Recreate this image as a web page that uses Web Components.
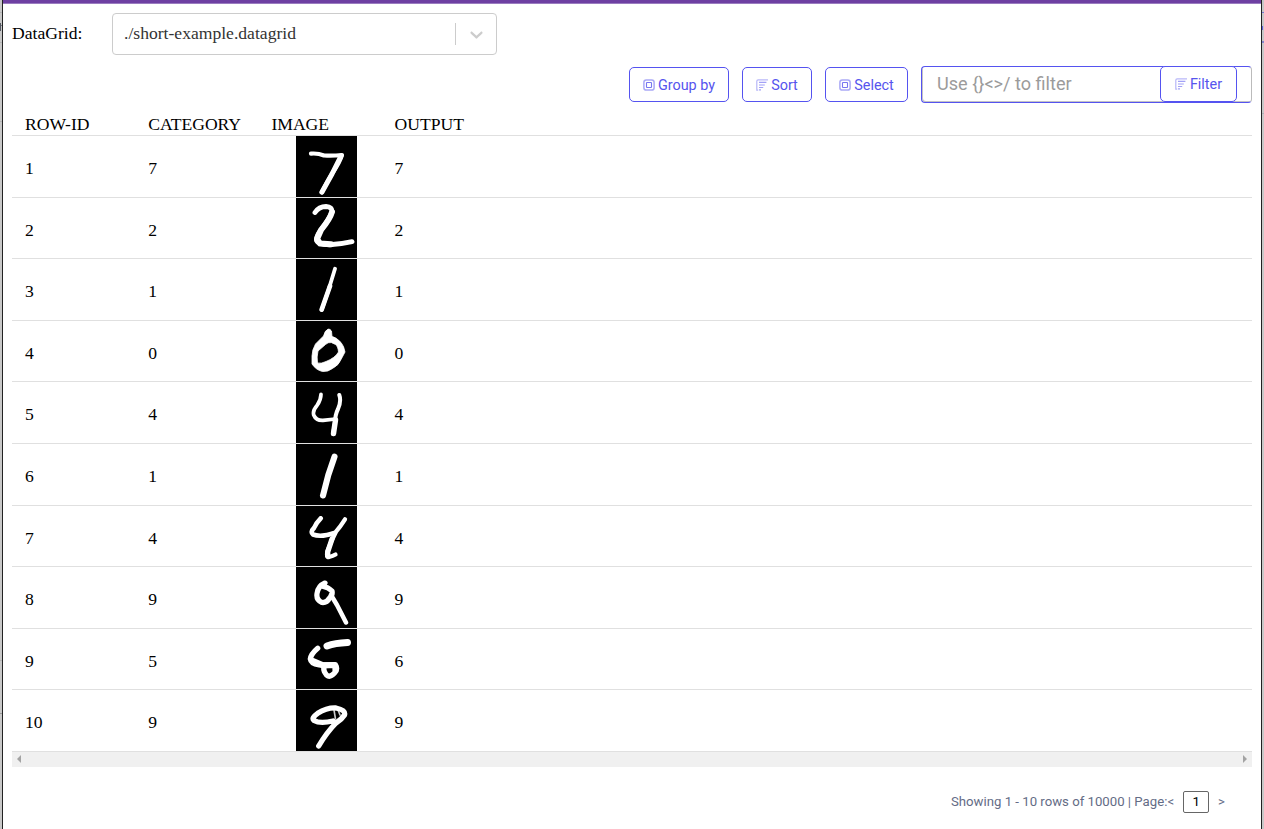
<!DOCTYPE html>
<html lang="en">
<head>
<meta charset="utf-8">
<title>DataGrid</title>
<style>
html, body { margin: 0; height: 100%; overflow: hidden; background: #fff; }
body { font: 17.6px "Liberation Serif", serif; color: #000; }
</style>
</head>
<body>
<datagrid-app></datagrid-app>
<script>
const define = (name, html, init) => {
  const t = document.createElement('template');
  t.innerHTML = html;
  customElements.define(name, class extends HTMLElement {
    connectedCallback() {
      if (this.shadowRoot) return;
      this.attachShadow({ mode: 'open' }).append(t.content.cloneNode(true));
      if (init) init(this, this.shadowRoot);
    }
  });
};

define('grid-select', `<style>
:host { display: flex; align-items: center; box-sizing: border-box; width: 385px; height: 42px; border: 1px solid #ccc; border-radius: 4px; color: #333; }
span { flex: 1; padding: 0 0 2px 11px; }
i { width: 1px; height: 22px; background: #ccc; }
svg { margin: 0 9px 0 10px; width: 21px; height: 21px; fill: #ccc; }
</style><span><slot></slot></span><i></i>
<svg viewBox="0 0 20 20"><path d="M4.516 7.548c0.436-0.446 1.043-0.481 1.576 0l3.908 3.747 3.908-3.747c0.533-0.481 1.141-0.446 1.574 0 0.436 0.445 0.408 1.197 0 1.615-0.406 0.418-4.695 4.502-4.695 4.502-0.217 0.223-0.502 0.335-0.787 0.335s-0.57-0.112-0.789-0.335c0 0-4.287-4.084-4.695-4.502s-0.436-1.17 0-1.615z"/></svg>`);

const icons = {
  box: '<rect x=".9" y=".9" width="10.2" height="10.2" rx="2.4" stroke-width="1.5" opacity=".5"/><rect x="3.5" y="3.5" width="5" height="5" rx=".6" stroke-width="1.1" opacity=".8"/>',
  sort: '<g stroke-width="1.2"><path d="M12 .9H2.2Q.8.9.8 2.3V11.1H2.2" opacity=".42"/><path d="M3 3.4h7.4M3 6h5.8M3 8.5h4.2M3 10.9h2" opacity=".55"/></g>'
};
define('tool-button', `<style>
:host { display: flex; align-items: center; justify-content: center; box-sizing: border-box; height: 35px; border: 1px solid #5553f0; border-radius: 5px; background: #fff; color: #5654ee; font: 14.4px Roboto, sans-serif; white-space: nowrap; }
svg { width: 12px; height: 12px; margin: 0 3px 1px 0; fill: none; stroke: #5654ee; }
</style><svg viewBox="0 0 12 12"></svg><slot></slot>`, (el, r) => {
  r.querySelector('svg').innerHTML = icons[el.getAttribute('icon')];
  el.style.width = el.getAttribute('w') + 'px';
});

define('filter-box', `<style>
:host { display: flex; box-sizing: border-box; width: 331px; height: 37px; border: 1px solid #5553f0; border-right-color: #bbb; border-radius: 4px; box-shadow: inset 1px -1px 0 #c4c4c4; }
span { flex: 1; padding-left: 15px; color: #9b9b9b; font: 18.1px/34px Roboto, sans-serif; white-space: pre; }
tool-button { margin: -1px 14px 0 0; height: 36px; }
</style><span>Use {}&lt;&gt;/ to filter</span><tool-button icon="sort" w="77">Filter</tool-button>`);

const strokes = {
  seven: '<path d="M15 17.6Q22 17 28 19.5Q37 20 46 19Q44 26 36.5 37Q31 46 25.7 56.5" stroke-width="4.2"/><path d="M45 20L36 38L26 56" stroke-width="5"/>',
  two: '<path d="M19 14.5Q23 8.5 30 8.5Q36.5 9 36 14Q34 20 25 32Q19.5 39 20.7 43Q22 46.5 33.5 46.7Q44 46.5 56 43.7" stroke-width="4.9"/><path d="M36 14Q34 21 25 32L21 41L24 45.5L35 46.3" stroke-width="5.9"/>',
  slash: '<path d="M39 9.7L32.5 31L25.7 51" stroke-width="3.8"/><path d="M34 27L25.7 50.5" stroke-width="4.7"/>',
  zero: '<path d="M32 8.3Q29 9 27.5 15L19.5 23Q16 29 16 35L16 43Q20 49 26.5 50.5Q32 51 36.5 47.5Q43 44 45 38.5L49 31Q48 25 45 21.5Q40 16 36 15.5L35.5 10Q34 7.5 32 8.3ZM35 21.5Q32 21 29.5 23.5L22 30Q20.5 36 21.5 42Q25 43 30 40.5Q39 37 42.5 31Q42 25 39.5 23.5Z" fill="#fff" fill-rule="evenodd" stroke-width=".8"/>',
  four: '<path d="M25 12.3Q25 18 21 23.5Q16.5 28.5 17.7 33Q20 38.7 27 38.4L39.5 37" stroke-width="3.7"/><path d="M43.3 13Q45.5 19 42 27Q39 33 39 41L37 52" stroke-width="4"/><path d="M39.5 38L37.5 51.5" stroke-width="5.4"/>',
  slash2: '<path d="M38.5 12.7L32.3 31L27 51.5" stroke-width="6.1"/>',
  four2: '<path d="M24.7 12.3Q20 17 18 22Q14 26 17 28.5Q25 31.5 38.5 27" stroke-width="4.6"/><path d="M49 13.3Q44 21 40 25.7Q35 35 31.5 45Q30 52 33 51Q37 50 39.5 48.5" stroke-width="4.3"/><path d="M36 33L31.7 46V49.5" stroke-width="5.3"/>',
  nine: '<path d="M29 16Q22 19 21 26.5Q20 33 26 35.5Q31 36 33.5 31Q37 28 36 24Q32 20 27 19.5Z" stroke-width="5.2"/><path d="M35 28L41 38L50 55.5" stroke-width="4.5"/>',
  five: '<path d="M31 17Q39 14 51.5 13.5" stroke-width="7"/><path d="M21.7 19.3Q15 25 14.3 30Q15 35 23 35.8L38 35.8Q43 39 38.5 44Q34 49 30.5 46Q26 40 29 37" stroke-width="5.3"/><path d="M17 32L27 36.3L39 36M39.5 37V41" stroke-width="6.2"/>',
  nine2: '<path d="M37 31Q24 34 18 30.5Q15 28 21.7 23.3Q31 17.5 40 18Q50 20 48.5 25Q46 29 40 33Q31 42 22.7 56" stroke-width="5.3"/><path d="M38 20L39.5 29M42 20L44 25" stroke-width="1.6" opacity=".8"/>'
};
define('digit-image', `<style>
:host { display: block; width: 61px; height: 60.6px; background: #000; overflow: hidden; }
svg { display: block; width: 61px; height: 61px; fill: none; stroke: #fff; stroke-linecap: round; stroke-linejoin: round; filter: blur(.75px); }
</style><svg viewBox="0 0 61 61"><g></g></svg>`, (el, r) => {
  r.querySelector('g').innerHTML = strokes[el.getAttribute('shape')];
});

define('grid-row', `<style>
:host { display: grid; grid-template-columns: 123.2px 123.2px 123.2px 1fr; grid-template-rows: 60.6px; box-sizing: border-box; height: 61.6px; border-bottom: 1px solid #e0e0e0; padding-left: 13px; line-height: 65px; }
:host([head]) { height: 29px; grid-template-rows: 28px; line-height: 34px; }
</style><slot></slot>`);

define('data-table', `<style>:host { display: block; }
digit-image { margin-left: 24.6px; }
</style><grid-row head><span>ROW-ID</span><span>CATEGORY</span><span>IMAGE</span><span>OUTPUT</span></grid-row>`, (el, r) => {
  [[7, 'seven', 7], [2, 'two', 2], [1, 'slash', 1], [0, 'zero', 0], [4, 'four', 4], [1, 'slash2', 1], [4, 'four2', 4], [9, 'nine', 9], [5, 'five', 6], [9, 'nine2', 9]].forEach(([c, s, o], i) => {
    const row = document.createElement('grid-row');
    row.innerHTML = `<span>${i + 1}</span><span>${c}</span><digit-image shape="${s}"></digit-image><span>${o}</span>`;
    r.append(row);
  });
});

define('scroll-track', `<style>
:host { display: flex; justify-content: space-between; align-items: center; box-sizing: border-box; height: 15px; padding: 0 5px; background: #f0f0f0; }
svg { width: 4px; height: 8px; fill: #a3a3a3; }
</style><svg viewBox="0 0 4 8"><path d="M4 0v8L0 4z"/></svg><svg viewBox="0 0 4 8"><path d="M0 0v8l4-4z"/></svg>`);

define('grid-pager', `<style>
:host { display: flex; align-items: center; justify-content: flex-end; margin-top: 24px; height: 22px; padding-right: 27px; font: 13.2px Roboto, sans-serif; color: #646c86; white-space: pre; }
b { box-sizing: border-box; width: 26px; height: 22px; margin: 0 9px; border: 1px solid #666; border-radius: 2px; font-weight: 400; color: #000; line-height: 20px; text-align: center; }
</style><span>Showing 1 - 10 rows of 10000 | Page:&lt;</span><b>1</b><span>&gt;</span>`);

define('page-edge', `<style>
:host { display: block; flex: none; background: #c8c8c8; }
:host([left]) { width: 2px; border-right: 1px solid #222; background: linear-gradient(#b4b4b4,#b4b4b4) 0 12px/2px 1px no-repeat, linear-gradient(#555963,#555963) 0 23px/1px 8px no-repeat, linear-gradient(#777b85,#777b85) 0 25px/2px 1px no-repeat, linear-gradient(#b4b4b4,#b4b4b4) 0 42px/2px 1px no-repeat, linear-gradient(#b4b4b4,#b4b4b4) 0 121px/2px 1px no-repeat, linear-gradient(#b4b4b4,#b4b4b4) 0 660px/2px 1px no-repeat, linear-gradient(#999,#999) 0 713px/2px 1px no-repeat, #c8c8c8; }
:host([right]) { width: 2px; border-left: 1px solid #222; background: linear-gradient(#7777d2,#7777d2) 0 12px/2px 1px no-repeat, linear-gradient(#6060dd,#6060dd) 0 26px/1px 4px no-repeat, linear-gradient(#8686cc,#8686cc) 0 41px/2px 2px no-repeat, linear-gradient(#b0b0b8,#b0b0b8) 0 113px/2px 1px no-repeat, #c8c8c8; }
</style>`);

define('datagrid-app', `<style>
:host { display: flex; height: 829px; width: 1264px; }
main { flex: 1; box-sizing: border-box; border-top: 3px solid #6e40a2; box-shadow: inset 0 1px 0 #9a7cc0; padding: 10px 9px 0; }
.source { display: flex; align-items: center; height: 42px; }
.source label { width: 100px; padding-bottom: 2px; }
.tools { display: flex; justify-content: flex-end; align-items: flex-start; height: 41px; margin-top: 11px; }
tool-button { margin: 1px 13px 0 0; padding-top: 1px; }
</style><page-edge left></page-edge><main>
<div class="source"><label>DataGrid:</label><grid-select>./short-example.datagrid</grid-select></div>
<div class="tools"><tool-button icon="box" w="100">Group by</tool-button><tool-button icon="sort" w="70">Sort</tool-button><tool-button icon="box" w="83">Select</tool-button><filter-box></filter-box></div>
<data-table></data-table><scroll-track></scroll-track><grid-pager></grid-pager></main><page-edge right></page-edge>`);
</script>
</body>
</html>
